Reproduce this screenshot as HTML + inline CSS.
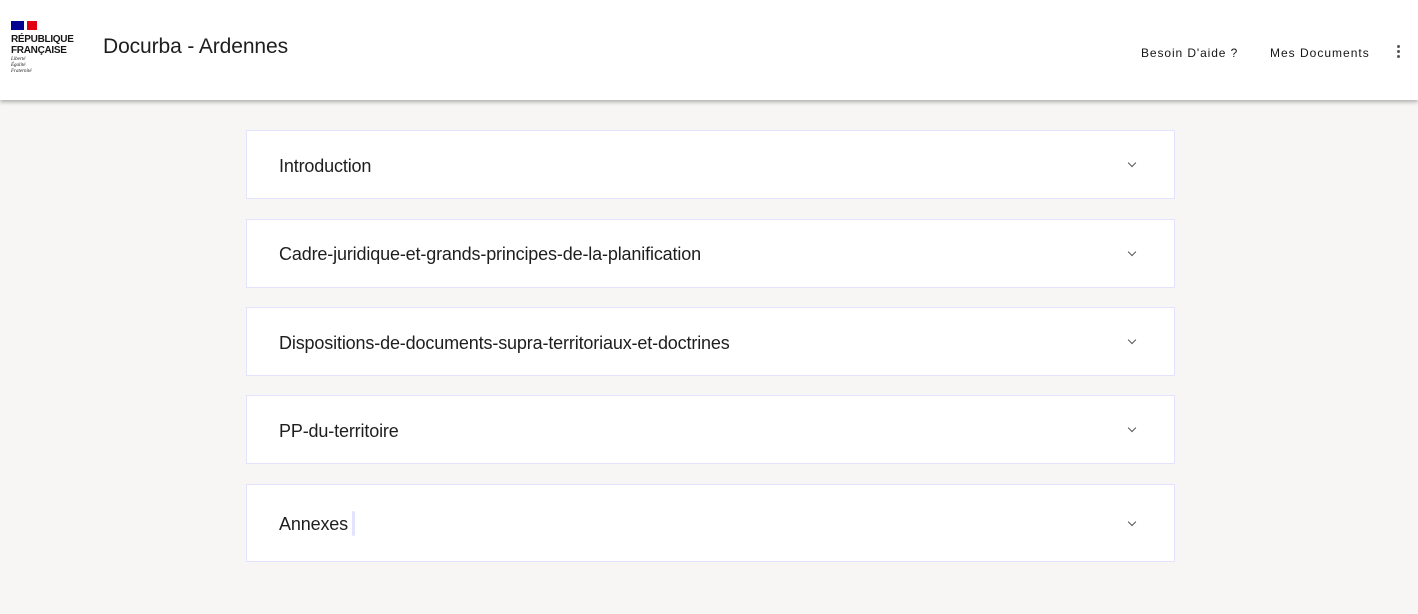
<!DOCTYPE html>
<html><head><meta charset="utf-8"><style>
*{box-sizing:border-box;margin:0;padding:0}
body{width:1418px;height:614px;background:#f7f6f5;font-family:"Liberation Sans",sans-serif;color:#161616;overflow:hidden;position:relative}
.hdr{position:absolute;left:0;top:0;width:1418px;height:100px;background:#fff;box-shadow:0 2px 4px rgba(0,0,0,.3)}
.card{position:absolute;left:246px;width:929px;background:#fff;border:1px solid #e3e3fd}
.card span{position:absolute;left:32px;font-size:18px;font-weight:500;color:#1e1e1e;letter-spacing:-0.15px}
.chev{position:absolute;left:882px;width:6px;height:6px;border-right:1.5px solid #555;border-bottom:1.5px solid #555;transform:rotate(45deg)}
</style></head><body>
<div class="hdr">
 <div style="position:absolute;left:11px;top:21px;width:13px;height:9px;background:#000091"></div>
 <div style="position:absolute;left:24px;top:21px;width:3px;height:9px;background:#fff"></div>
 <div style="position:absolute;left:27px;top:21px;width:10px;height:9px;background:#e1000f"></div>
 <div style="position:absolute;left:11px;top:34px;font-size:10px;font-weight:bold;line-height:11px;letter-spacing:-.3px">RÉPUBLIQUE<br>FRANÇAISE</div>
 <div style="position:absolute;left:11px;top:57px;font-size:5px;font-style:italic;line-height:6px;font-family:'Liberation Serif',serif">Liberté<br>Égalité<br>Fraternité</div>
 <div style="position:absolute;left:103px;top:35px;font-size:21px;color:#1e1e1e;letter-spacing:-0.1px">Docurba - Ardennes</div>
 <div style="position:absolute;left:1141px;top:46px;font-size:12px;letter-spacing:.9px">Besoin D'aide ?</div>
 <div style="position:absolute;left:1270px;top:46px;font-size:12px;letter-spacing:1px">Mes Documents</div>
 <div style="position:absolute;left:1397px;top:45px;width:3px;height:3px;border-radius:50%;background:#555;box-shadow:0 5px 0 #555,0 10px 0 #555"></div>
</div>
<div class="card" style="top:130px;height:69px"><span style="top:25px">Introduction</span><div class="chev" style="top:29px"></div></div>
<div class="card" style="top:219px;height:69px"><span style="top:24px">Cadre-juridique-et-grands-principes-de-la-planification</span><div class="chev" style="top:29px"></div></div>
<div class="card" style="top:307px;height:69px"><span style="top:25px">Dispositions-de-documents-supra-territoriaux-et-doctrines</span><div class="chev" style="top:29px"></div></div>
<div class="card" style="top:395px;height:69px"><span style="top:25px">PP-du-territoire</span><div class="chev" style="top:29px"></div></div>
<div class="card" style="top:484px;height:78px"><span style="top:29px">Annexes</span><div style="position:absolute;left:105px;top:26px;width:3px;height:25px;background:#e3e3fd;border-radius:2px"></div><div class="chev" style="top:34px"></div></div>
</body></html>
